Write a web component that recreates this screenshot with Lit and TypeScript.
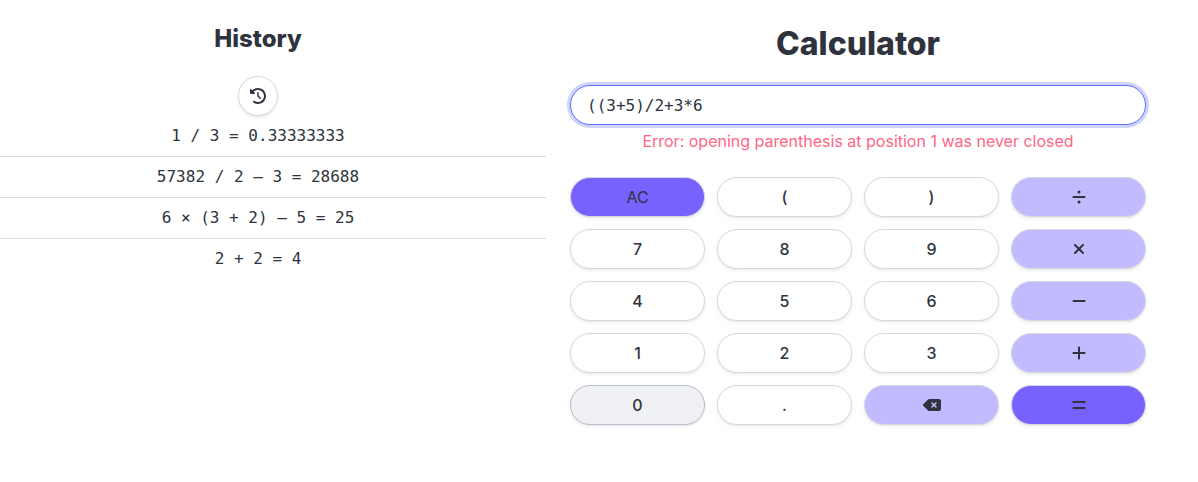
import { LitElement, html, css, svg } from "lit";
import { customElement, property, state } from "lit/decorators.js";

const icons: Record<string, { width: number; path: string }> = {
  history: {
    width: 512,
    path: "M75 75L41 41C25.9 25.9 0 36.6 0 57.9V168c0 13.3 10.7 24 24 24H134.1c21.4 0 32.1-25.9 17-41l-30.8-30.8C155 85.5 203 64 256 64c106 0 192 86 192 192s-86 192-192 192c-40.8 0-78.6-12.7-109.7-34.4c-14.5-10.1-34.4-6.6-44.6 7.9s-6.6 34.4 7.9 44.6C151.2 495 201.7 512 256 512c141.4 0 256-114.6 256-256S397.4 0 256 0C185.3 0 121.3 28.7 75 75zm181 53c-13.3 0-24 10.7-24 24V256c0 6.4 2.5 12.5 7 17l72 72c9.4 9.4 24.6 9.4 33.9 0s9.4-24.6 0-33.9l-65-65V152c0-13.3-10.7-24-24-24z",
  },
  divide: {
    width: 448,
    path: "M272 96a48 48 0 1 0-96 0 48 48 0 1 0 96 0zm0 320a48 48 0 1 0-96 0 48 48 0 1 0 96 0zM400 288c17.7 0 32-14.3 32-32s-14.3-32-32-32H48c-17.7 0-32 14.3-32 32s14.3 32 32 32H400z",
  },
  multiply: {
    width: 384,
    path: "M342.6 150.6c12.5-12.5 12.5-32.8 0-45.3s-32.8-12.5-45.3 0L192 210.7 86.6 105.4c-12.5-12.5-32.8-12.5-45.3 0s-12.5 32.8 0 45.3L146.7 256 41.4 361.4c-12.5 12.5-12.5 32.8 0 45.3s32.8 12.5 45.3 0L192 301.3 297.4 406.6c12.5 12.5 32.8 12.5 45.3 0s12.5-32.8 0-45.3L237.3 256 342.6 150.6z",
  },
  subtract: {
    width: 448,
    path: "M432 256c0 17.7-14.3 32-32 32L48 288c-17.7 0-32-14.3-32-32s14.3-32 32-32l352 0c17.7 0 32 14.3 32 32z",
  },
  add: {
    width: 448,
    path: "M256 80c0-17.7-14.3-32-32-32s-32 14.3-32 32V224H48c-17.7 0-32 14.3-32 32s14.3 32 32 32H192V432c0 17.7 14.3 32 32 32s32-14.3 32-32V288H400c17.7 0 32-14.3 32-32s-14.3-32-32-32H256V80z",
  },
  equals: {
    width: 448,
    path: "M48 128c-17.7 0-32 14.3-32 32s14.3 32 32 32H400c17.7 0 32-14.3 32-32s-14.3-32-32-32H48zm0 192c-17.7 0-32 14.3-32 32s14.3 32 32 32H400c17.7 0 32-14.3 32-32s-14.3-32-32-32H48z",
  },
  backspace: {
    width: 576,
    path: "M576 128c0-35.3-28.7-64-64-64H205.3c-17 0-33.3 6.7-45.3 18.7L9.4 233.4c-6 6-9.4 14.1-9.4 22.6s3.4 16.6 9.4 22.6L160 429.3c12 12 28.3 18.7 45.3 18.7H512c35.3 0 64-28.7 64-64V128zM271 175c9.4-9.4 24.6-9.4 33.9 0l47 47 47-47c9.4-9.4 24.6-9.4 33.9 0s9.4 24.6 0 33.9l-47 47 47 47c9.4 9.4 9.4 24.6 0 33.9s-24.6 9.4-33.9 0l-47-47-47 47c-9.4 9.4-24.6 9.4-33.9 0s-9.4-24.6 0-33.9l47-47-47-47c-9.4-9.4-9.4-24.6 0-33.9z",
  },
};

@customElement("calc-icon")
class CalcIcon extends LitElement {
  static styles = css`
    :host {
      display: inline-flex;
    }
    .icon {
      height: 16px;
      fill: currentColor;
    }
  `;
  @property() name = "add";
  render() {
    const icon = icons[this.name];
    return html`<svg class="icon" viewBox="0 0 ${icon.width} 512" aria-hidden="true">
      ${svg`<path d=${icon.path}></path>`}
    </svg>`;
  }
}

interface Key {
  label: string;
  icon?: string;
  kind?: string;
}

const keys: Key[] = [
  { label: "AC", kind: "primary" },
  { label: "(" },
  { label: ")" },
  { label: "÷", icon: "divide", kind: "operator" },
  { label: "7" },
  { label: "8" },
  { label: "9" },
  { label: "×", icon: "multiply", kind: "operator" },
  { label: "4" },
  { label: "5" },
  { label: "6" },
  { label: "−", icon: "subtract", kind: "operator" },
  { label: "1" },
  { label: "2" },
  { label: "3" },
  { label: "+", icon: "add", kind: "operator" },
  { label: "0", kind: "hovered" },
  { label: "." },
  { label: "Backspace", icon: "backspace", kind: "operator" },
  { label: "=", icon: "equals", kind: "primary" },
];

@customElement("app-root")
class AppRoot extends LitElement {
  static styles = css`
    :host {
      display: block;
      overflow: hidden;
      font-family: Inter, sans-serif;
      font-size: 16px;
      line-height: 24px;
      color: #2e333d;
    }
    .layout {
      display: grid;
      grid-template-columns: 1fr 1fr;
      gap: 24px;
      margin: 0 52px 0 -30px;
      padding: 24px 0;
    }
    .panel {
      display: flex;
      flex-direction: column;
      text-align: center;
    }
    .title {
      margin: 0 0 21px;
      font-size: 32px;
      line-height: 40px;
      font-weight: 800;
    }
    .small {
      margin-bottom: 22px;
      font-size: 24px;
      line-height: 30px;
    }
    .button {
      box-sizing: border-box;
      display: inline-flex;
      align-items: center;
      justify-content: center;
      height: 40px;
      padding: 0;
      border: 1px solid #d6d9e0;
      border-radius: 20px;
      background: #fff;
      color: #2e333d;
      font: 500 16px/24px Inter, sans-serif;
      box-shadow: 0 1px 2px rgba(9, 10, 12, 0.05), 0 2px 4px rgba(9, 10, 12, 0.05);
    }
    .round {
      align-self: center;
      width: 40px;
    }
    .list {
      margin: 0;
      padding: 0;
      list-style: none;
      font-family: "DejaVu Sans Mono", monospace;
    }
    .entry {
      padding: 8px 0;
    }
    .entry + .entry {
      border-top: 1px solid #d9dae6;
    }
    .input {
      box-sizing: border-box;
      width: 100%;
      height: 40px;
      padding: 0 16px;
      border: 1px solid #5c6cff;
      border-radius: 20px;
      outline: 0;
      background: #fff;
      box-shadow: 0 0 0 3px #ced3ff;
      color: #2e333d;
      font: 16px/24px "DejaVu Sans Mono", monospace;
    }
    .error {
      margin: 4px 0 24px;
      color: #ff6685;
    }
    .keys {
      display: grid;
      grid-template-columns: repeat(4, 1fr);
      gap: 12px;
    }
    .operator {
      background: #c3bbff;
    }
    .primary {
      background: #7761ff;
      font-weight: 400;
    }
    .hovered {
      border-color: #b8bbcc;
      background: #f0f1f4;
    }
  `;

  @state() private expression = "((3+5)/2+3*6";
  @state() private history = [
    "1 / 3 = 0.33333333",
    "57382 / 2 – 3 = 28688",
    "6 × (3 + 2) – 5 = 25",
    "2 + 2 = 4",
  ];

  render() {
    return html`
      <main class="layout">
        <section class="panel">
          <h2 class="title small">History</h2>
          <button class="button round" type="button" aria-label="Clear history">
            <calc-icon name="history"></calc-icon>
          </button>
          <ul class="list">
            ${this.history.map((entry) => html`<li class="entry">${entry}</li>`)}
          </ul>
        </section>
        <section class="panel">
          <h1 class="title">Calculator</h1>
          <input
            class="input"
            type="text"
            aria-label="Expression"
            aria-describedby="error"
            .value=${this.expression}
            @input=${(e: Event) => (this.expression = (e.target as HTMLInputElement).value)}
          />
          <p class="error" id="error">Error: opening parenthesis at position 1 was never closed</p>
          <div class="keys">
            ${keys.map(
              (key) => html`<button class="button ${key.kind ?? ""}" type="button" aria-label=${key.label}>
                ${key.icon ? html`<calc-icon name=${key.icon}></calc-icon>` : key.label}
              </button>`
            )}
          </div>
        </section>
      </main>
    `;
  }
}
